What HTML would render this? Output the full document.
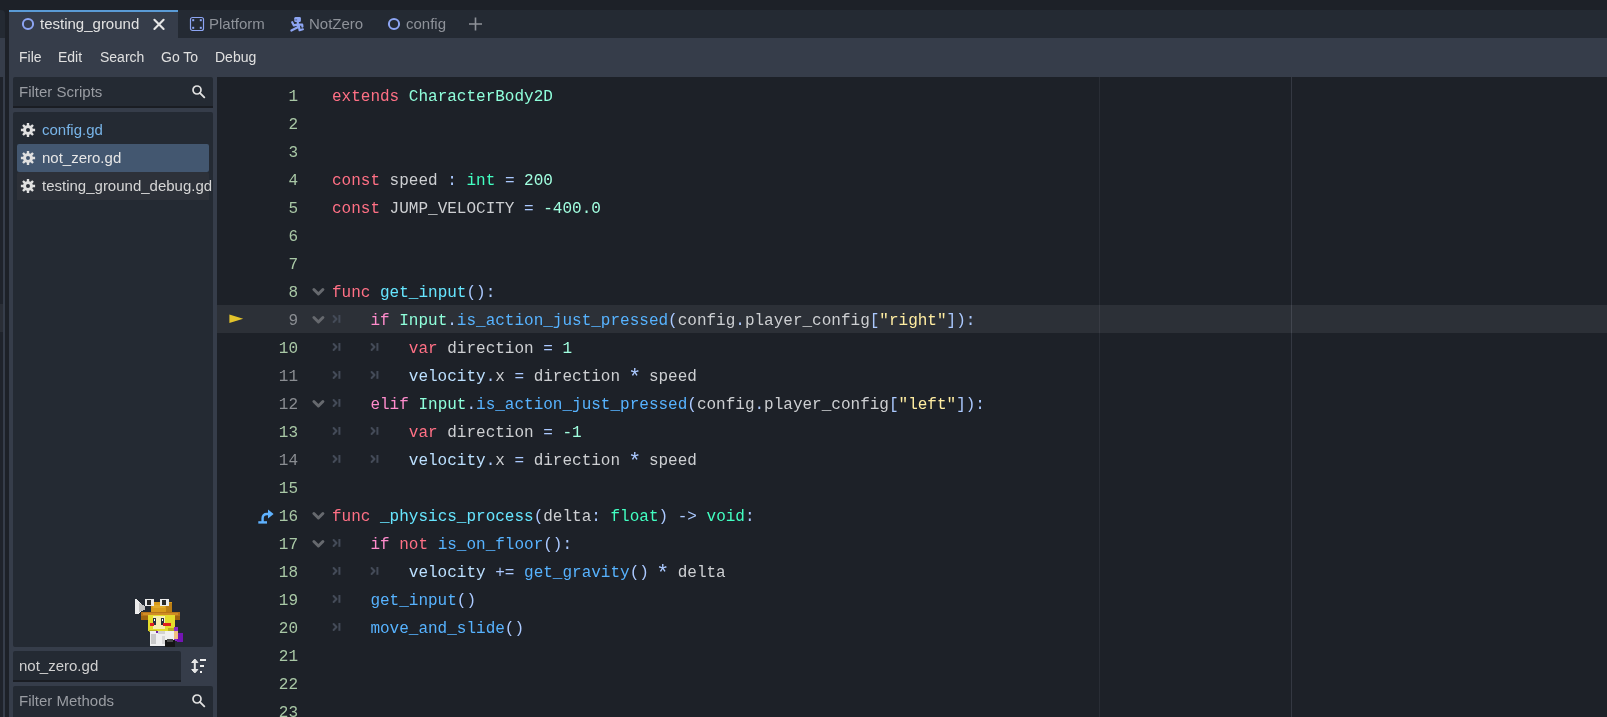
<!DOCTYPE html>
<html><head><meta charset="utf-8">
<style>
*{margin:0;padding:0;box-sizing:border-box}
html,body{width:1607px;height:717px;overflow:hidden;background:#1d2128}
body{position:relative;font-family:"Liberation Sans",sans-serif;font-size:15px;color:#e0e0e0}
.abs{position:absolute}
/* left clipped dock */
#ldock-tab{position:absolute;left:0;top:10px;width:5px;height:28px;background:#242a33;border-top-right-radius:4px}
#ldock-menu{position:absolute;left:0;top:38px;width:5px;height:39px;background:#363d4a}
#ldock-body{position:absolute;left:0;top:77px;width:5px;height:640px;background:#363d4a}
#ldock-list{position:absolute;left:0;top:77px;width:2.5px;height:640px;background:#1f232b}
#ldock-hl{position:absolute;left:0;top:304px;width:2.5px;height:28px;background:#2a2e36}
/* tab bar */
#tabbar{position:absolute;left:9px;top:10px;width:1598px;height:28px;background:#242a33}
#tab-active{position:absolute;left:9px;top:10px;width:169px;height:28px;background:#363d4a;border-top:2px solid #5a9bd6}
.tabtxt{position:absolute;top:10px;height:28px;line-height:28px;white-space:pre}
#menubar{position:absolute;left:9px;top:38px;width:1598px;height:39px;background:#363d4a}
.menu{position:absolute;top:38px;height:39px;line-height:39px;font-size:14px;white-space:pre;color:#e0e0e0}
/* left panel */
#lpanel{position:absolute;left:9px;top:77px;width:208px;height:640px;background:#363d4a}
.input{position:absolute;left:13px;width:200px;background:#242a33;border-radius:2px 2px 0 0;border-bottom:2px solid #1a1d23}
.ph{position:absolute;left:19px;white-space:pre;color:#9a9da3}
#slist{position:absolute;left:13px;top:112px;width:200px;height:535px;background:#242a33;border-radius:2px}
.item{position:absolute;left:17px;width:192px;height:28px;border-radius:2px}
.itxt{position:absolute;left:42px;white-space:pre;line-height:28px;height:28px}
.gear{position:absolute;left:20px}
#mlabel{position:absolute;left:13px;top:651px;width:168px;height:31px;background:#242a33;border-radius:2px 2px 0 0;border-bottom:2px solid #1a1d23}
/* code */
#code{position:absolute;left:217px;top:77px;width:1390px;height:640px;background:#1d2128;overflow:hidden}
.guide{position:absolute;top:77px;width:1px;height:640px}
.ln-row{position:absolute;left:0;width:1607px;height:28px}
.curline{position:absolute;left:217px;top:0;width:1390px;height:28px;background:rgba(255,255,255,0.07)}
.ln{position:absolute;left:240px;width:58px;text-align:right;font-family:"Liberation Mono",monospace;font-size:16px;line-height:28px;color:#a9c8a6;top:2px;transform-origin:0 18px;transform:scaleY(1.08)}
.ln.u{color:#8a8d92}
.code{position:absolute;left:331.5px;top:1px;font-family:"Liberation Mono",monospace;font-size:16px;line-height:28px;white-space:pre;color:#cdcfd2;top:2px}
.fold{position:absolute;left:310px;top:8px}
.tabm{position:absolute;top:8px}
.exec{position:absolute;left:229px;top:9.4px}
.ovr{position:absolute;left:257.5px;top:8px}
.menu,.tabtxt,.ph,.itxt,.code,.ln{will-change:transform}
.kw{color:#ff7085}.cf{color:#ff8ccc}.base{color:#42ffc2}.eng{color:#8fffdb}.str{color:#ffeda1}.num{color:#a1ffe0}.fdef{color:#66e6ff}.fcall{color:#57b3ff}.mem{color:#bce0ff}.sym{color:#abc9ff}.star{display:inline-block;transform:translateY(2px) scale(1.35)}
</style></head><body>
<div id="ldock-tab"></div>
<div id="ldock-menu"></div>
<div id="ldock-body"></div>
<div id="ldock-list"></div>
<div id="ldock-hl"></div>

<div id="tabbar"></div>
<div id="tab-active"></div>
<svg class="abs" style="left:21px;top:17px" width="14" height="14" viewBox="0 0 14 14"><circle cx="7" cy="7" r="5.1" fill="none" stroke="#8da5f3" stroke-width="2"/></svg>
<div class="tabtxt" style="left:40px;color:#e2e2e2">testing_ground</div>
<svg class="abs" style="left:152px;top:18px" width="14" height="13" viewBox="0 0 14 13"><path d="M2.4 1.8 L11.6 11 M11.6 1.8 L2.4 11" stroke="#e6e6e6" stroke-width="2.1" stroke-linecap="round"/></svg>

<svg class="abs" style="left:189px;top:16px" width="16" height="16" viewBox="0 0 16 16"><rect x="1.5" y="1.5" width="13" height="13" rx="2" fill="none" stroke="#8da5f3" stroke-width="1.2"/><rect x="3.2" y="3.2" width="2" height="2" fill="#8da5f3"/><rect x="10.8" y="3.2" width="2" height="2" fill="#8da5f3"/><rect x="3.2" y="10.8" width="2" height="2" fill="#8da5f3"/><rect x="10.8" y="10.8" width="2" height="2" fill="#8da5f3"/></svg>
<div class="tabtxt" style="left:209px;color:#8e9299">Platform</div>

<svg class="abs" style="left:286px;top:14px" width="22" height="20" viewBox="0 0 22 20"><rect x="8.3" y="2.9" width="6.6" height="5.2" rx="1.4" fill="#8da5f3"/><rect x="9.3" y="5.1" width="1.8" height="1.5" fill="#6274ad"/><path d="M6.2 8.2 L7.9 11.4 L12 10.4 L16.2 10.6 L16.4 12.6 M11.8 8 L11.8 13.2 L5.4 16.5 M12.9 12.3 L13.6 16.2 L16.9 15.3" fill="none" stroke="#8da5f3" stroke-width="2.2" stroke-linecap="round" stroke-linejoin="round"/></svg>
<div class="tabtxt" style="left:309px;color:#8e9299">NotZero</div>

<svg class="abs" style="left:387px;top:17px" width="14" height="14" viewBox="0 0 14 14"><circle cx="7" cy="7" r="5.1" fill="none" stroke="#8da5f3" stroke-width="2"/></svg>
<div class="tabtxt" style="left:406px;color:#8e9299">config</div>
<svg class="abs" style="left:468px;top:16px" width="16" height="16" viewBox="0 0 16 16"><path d="M7.5 1.5 V14.5 M1 8 H14" stroke="#8e9299" stroke-width="1.6"/></svg>

<div id="menubar"></div>
<div class="menu" style="left:19px">File</div>
<div class="menu" style="left:58px">Edit</div>
<div class="menu" style="left:100px">Search</div>
<div class="menu" style="left:161px">Go To</div>
<div class="menu" style="left:215px">Debug</div>

<div id="lpanel"></div>
<div class="input" style="top:77px;height:31px"></div>
<div class="ph" style="top:77px;height:30px;line-height:30px">Filter Scripts</div>
<svg class="abs" style="left:190px;top:83px" width="17" height="17" viewBox="0 0 17 17"><circle cx="7" cy="7" r="4" fill="none" stroke="#e0e0e0" stroke-width="1.7"/><path d="M9.8 9.8 L14.3 14.3" stroke="#e0e0e0" stroke-width="1.9" stroke-linecap="round"/></svg>

<div id="slist"></div>
<div class="item" style="top:144px;background:#435770"></div>
<div class="item" style="top:172px;background:#2d3139;border-radius:2px 2px 0 0"></div>
<svg class="abs" style="left:20px;top:122px" width="16" height="16" viewBox="0 0 16 16"><path d="M6.82 0.90 L9.18 0.90 L9.21 3.15 L10.57 3.71 L12.19 2.14 L13.86 3.81 L12.29 5.43 L12.85 6.79 L15.10 6.82 L15.10 9.18 L12.85 9.21 L12.29 10.57 L13.86 12.19 L12.19 13.86 L10.57 12.29 L9.21 12.85 L9.18 15.10 L6.82 15.10 L6.79 12.85 L5.43 12.29 L3.81 13.86 L2.14 12.19 L3.71 10.57 L3.15 9.21 L0.90 9.18 L0.90 6.82 L3.15 6.79 L3.71 5.43 L2.14 3.81 L3.81 2.14 L5.43 3.71 L6.79 3.15 Z M10.00 8.00 A2.0 2.0 0 1 0 6.00 8.00 A2.0 2.0 0 1 0 10.00 8.00 Z" fill="#e0e0e0" fill-rule="evenodd"/></svg>
<svg class="abs" style="left:20px;top:150px" width="16" height="16" viewBox="0 0 16 16"><path d="M6.82 0.90 L9.18 0.90 L9.21 3.15 L10.57 3.71 L12.19 2.14 L13.86 3.81 L12.29 5.43 L12.85 6.79 L15.10 6.82 L15.10 9.18 L12.85 9.21 L12.29 10.57 L13.86 12.19 L12.19 13.86 L10.57 12.29 L9.21 12.85 L9.18 15.10 L6.82 15.10 L6.79 12.85 L5.43 12.29 L3.81 13.86 L2.14 12.19 L3.71 10.57 L3.15 9.21 L0.90 9.18 L0.90 6.82 L3.15 6.79 L3.71 5.43 L2.14 3.81 L3.81 2.14 L5.43 3.71 L6.79 3.15 Z M10.00 8.00 A2.0 2.0 0 1 0 6.00 8.00 A2.0 2.0 0 1 0 10.00 8.00 Z" fill="#e0e0e0" fill-rule="evenodd"/></svg>
<svg class="abs" style="left:20px;top:178px" width="16" height="16" viewBox="0 0 16 16"><path d="M6.82 0.90 L9.18 0.90 L9.21 3.15 L10.57 3.71 L12.19 2.14 L13.86 3.81 L12.29 5.43 L12.85 6.79 L15.10 6.82 L15.10 9.18 L12.85 9.21 L12.29 10.57 L13.86 12.19 L12.19 13.86 L10.57 12.29 L9.21 12.85 L9.18 15.10 L6.82 15.10 L6.79 12.85 L5.43 12.29 L3.81 13.86 L2.14 12.19 L3.71 10.57 L3.15 9.21 L0.90 9.18 L0.90 6.82 L3.15 6.79 L3.71 5.43 L2.14 3.81 L3.81 2.14 L5.43 3.71 L6.79 3.15 Z M10.00 8.00 A2.0 2.0 0 1 0 6.00 8.00 A2.0 2.0 0 1 0 10.00 8.00 Z" fill="#e0e0e0" fill-rule="evenodd"/></svg>
<div class="itxt" style="top:116px;color:#78b4e8">config.gd</div>
<div class="itxt" style="top:144px;color:#e6e6e6">not_zero.gd</div>
<div class="itxt" style="top:172px;color:#d6d6d6">testing_ground_debug.gd</div>

<svg class="abs" style="left:0;top:0" width="200" height="700" viewBox="0 0 200 700" shape-rendering="crispEdges"><path d="M135 599 L138 600 L141 604 L145 606 L145 610 L141 611 L138 614 L135 614 Z" fill="#ececec"/><path d="M139 603 L141 604 L145 606 L145 610 L141 611 L139 612 Z" fill="#c4c4c4"/><rect x="151" y="602" width="21" height="10" fill="#d89c1c"/><rect x="166" y="603" width="6" height="9" fill="#bb7e14"/><rect x="153" y="605" width="12" height="3" fill="#e2ab2a"/><rect x="145" y="599" width="9" height="7" fill="#ececec"/><rect x="147" y="600" width="4" height="5" fill="#2a2a2a"/><rect x="160" y="599" width="9" height="7" fill="#ececec"/><rect x="162" y="600" width="4" height="5" fill="#2a2a2a"/><rect x="141" y="612" width="39" height="4" fill="#b8741a"/><rect x="143" y="613" width="35" height="2" fill="#d08c24"/><rect x="141" y="616" width="9" height="4" fill="#a0640f"/><rect x="170" y="616" width="10" height="4" fill="#a0640f"/><rect x="148" y="615" width="27" height="16" fill="#e4dc2c"/><rect x="149" y="630" width="8" height="2" fill="#b8b020"/><rect x="168" y="628" width="6" height="3" fill="#b8b020"/><rect x="153" y="616" width="12" height="13" fill="#f6eeb0"/><rect x="153" y="618" width="3" height="7" fill="#283040"/><rect x="161" y="618" width="3" height="7" fill="#283040"/><rect x="154" y="619" width="1" height="2" fill="#ffffff"/><rect x="162" y="619" width="1" height="2" fill="#ffffff"/><rect x="150" y="623" width="4" height="3" fill="#e02020"/><rect x="163" y="623" width="8" height="3" fill="#e02020"/><rect x="174" y="627" width="4" height="14" fill="#8a2cc8"/><rect x="177" y="633" width="6" height="9" fill="#7414b4"/><rect x="172" y="631" width="6" height="8" fill="#f0c080"/><rect x="150" y="631" width="24" height="15" fill="#f0f0f0"/><rect x="151" y="634" width="5" height="10" fill="#cacaca"/><rect x="158" y="631" width="7" height="3" fill="#d2d2d2"/><rect x="156" y="631" width="2" height="2" fill="#7020a0"/><rect x="162" y="636" width="3" height="8" fill="#d8d8d8"/><rect x="165" y="640" width="10" height="7" fill="#141414"/><rect x="167" y="639" width="6" height="3" fill="#4a4a4a"/></svg>

<div id="mlabel"></div>
<div class="ph" style="top:651px;height:30px;line-height:30px;color:#d0d0d0">not_zero.gd</div>
<svg class="abs" style="left:190px;top:657px" width="18" height="18" viewBox="0 0 18 18"><path d="M4.8 3 V15" stroke="#e6e6e6" stroke-width="2"/><path d="M1.7 5.5 L4.8 2 L7.9 5.5 Z M1.7 12.5 L4.8 16 L7.9 12.5 Z" fill="#e6e6e6" stroke="#e6e6e6" stroke-width="1" stroke-linejoin="round"/><rect x="10" y="2" width="6" height="2" fill="#eeeeee"/><rect x="10" y="8" width="4" height="2" fill="#eeeeee"/><rect x="10" y="14" width="2" height="2" fill="#eeeeee"/></svg>

<div class="input" style="top:686px;height:33px"></div>
<div class="ph" style="top:686px;height:30px;line-height:30px">Filter Methods</div>
<svg class="abs" style="left:190px;top:692px" width="17" height="17" viewBox="0 0 17 17"><circle cx="7" cy="7" r="4" fill="none" stroke="#e0e0e0" stroke-width="1.7"/><path d="M9.8 9.8 L14.3 14.3" stroke="#e0e0e0" stroke-width="1.9" stroke-linecap="round"/></svg>

<div id="code"></div>
<div class="guide" style="left:1099px;background:#292d35"></div>
<div class="guide" style="left:1291px;background:#343842"></div>
<div class="ln-row" style="top:81px">
<div class="ln">1</div>
<div class="code"><span class="kw">extends</span> <span class="eng">CharacterBody2D</span></div>
</div>
<div class="ln-row" style="top:109px">
<div class="ln">2</div>
<div class="code"></div>
</div>
<div class="ln-row" style="top:137px">
<div class="ln">3</div>
<div class="code"></div>
</div>
<div class="ln-row" style="top:165px">
<div class="ln">4</div>
<div class="code"><span class="kw">const</span> speed <span class="sym">:</span> <span class="base">int</span> <span class="sym">=</span> <span class="num">200</span></div>
</div>
<div class="ln-row" style="top:193px">
<div class="ln">5</div>
<div class="code"><span class="kw">const</span> JUMP_VELOCITY <span class="sym">=</span> <span class="num">-400.0</span></div>
</div>
<div class="ln-row" style="top:221px">
<div class="ln">6</div>
<div class="code"></div>
</div>
<div class="ln-row" style="top:249px">
<div class="ln">7</div>
<div class="code"></div>
</div>
<div class="ln-row" style="top:277px">
<div class="ln">8</div>
<svg class="fold" width="16" height="16" viewBox="0 0 16 16"><path d="M3.9 4.5 L8.4 9 L12.9 4.5" fill="none" stroke="#66696e" stroke-width="3" stroke-linecap="round" stroke-linejoin="round"/></svg>
<div class="code"><span class="kw">func</span> <span class="fdef">get_input</span><span class="sym">():</span></div>
</div>
<div class="ln-row" style="top:305px">
<div class="curline"></div>
<div class="ln u">9</div>
<svg class="fold" width="16" height="16" viewBox="0 0 16 16"><path d="M3.9 4.5 L8.4 9 L12.9 4.5" fill="none" stroke="#66696e" stroke-width="3" stroke-linecap="round" stroke-linejoin="round"/></svg>
<svg class="tabm" style="left:331.5px" width="12" height="12" viewBox="0 0 12 12"><path d="M1.6 3 L4.5 6 L1.6 9" fill="none" stroke="#444b58" stroke-width="2" stroke-linecap="round" stroke-linejoin="round"/><path d="M7.4 2 V9.8" stroke="#444b58" stroke-width="2"/></svg>
<div class="code">    <span class="cf">if</span> <span class="eng">Input</span><span class="sym">.</span><span class="fcall">is_action_just_pressed</span><span class="sym">(</span>config<span class="sym">.</span>player_config<span class="sym">[</span><span class="str">&quot;right&quot;</span><span class="sym">]):</span></div>
<svg class="exec" width="16" height="12" viewBox="0 0 16 12"><path d="M0.4 0.4 L14.2 4.7 L0.4 9 Z" fill="#e3c32b"/></svg>
</div>
<div class="ln-row" style="top:333px">
<div class="ln">10</div>
<svg class="tabm" style="left:331.5px" width="12" height="12" viewBox="0 0 12 12"><path d="M1.6 3 L4.5 6 L1.6 9" fill="none" stroke="#444b58" stroke-width="2" stroke-linecap="round" stroke-linejoin="round"/><path d="M7.4 2 V9.8" stroke="#444b58" stroke-width="2"/></svg>
<svg class="tabm" style="left:369.9px" width="12" height="12" viewBox="0 0 12 12"><path d="M1.6 3 L4.5 6 L1.6 9" fill="none" stroke="#444b58" stroke-width="2" stroke-linecap="round" stroke-linejoin="round"/><path d="M7.4 2 V9.8" stroke="#444b58" stroke-width="2"/></svg>
<div class="code">        <span class="kw">var</span> direction <span class="sym">=</span> <span class="num">1</span></div>
</div>
<div class="ln-row" style="top:361px">
<div class="ln u">11</div>
<svg class="tabm" style="left:331.5px" width="12" height="12" viewBox="0 0 12 12"><path d="M1.6 3 L4.5 6 L1.6 9" fill="none" stroke="#444b58" stroke-width="2" stroke-linecap="round" stroke-linejoin="round"/><path d="M7.4 2 V9.8" stroke="#444b58" stroke-width="2"/></svg>
<svg class="tabm" style="left:369.9px" width="12" height="12" viewBox="0 0 12 12"><path d="M1.6 3 L4.5 6 L1.6 9" fill="none" stroke="#444b58" stroke-width="2" stroke-linecap="round" stroke-linejoin="round"/><path d="M7.4 2 V9.8" stroke="#444b58" stroke-width="2"/></svg>
<div class="code">        <span class="mem">velocity</span><span class="sym">.</span>x <span class="sym">=</span> direction <span class="sym star">*</span> speed</div>
</div>
<div class="ln-row" style="top:389px">
<div class="ln u">12</div>
<svg class="fold" width="16" height="16" viewBox="0 0 16 16"><path d="M3.9 4.5 L8.4 9 L12.9 4.5" fill="none" stroke="#66696e" stroke-width="3" stroke-linecap="round" stroke-linejoin="round"/></svg>
<svg class="tabm" style="left:331.5px" width="12" height="12" viewBox="0 0 12 12"><path d="M1.6 3 L4.5 6 L1.6 9" fill="none" stroke="#444b58" stroke-width="2" stroke-linecap="round" stroke-linejoin="round"/><path d="M7.4 2 V9.8" stroke="#444b58" stroke-width="2"/></svg>
<div class="code">    <span class="cf">elif</span> <span class="eng">Input</span><span class="sym">.</span><span class="fcall">is_action_just_pressed</span><span class="sym">(</span>config<span class="sym">.</span>player_config<span class="sym">[</span><span class="str">&quot;left&quot;</span><span class="sym">]):</span></div>
</div>
<div class="ln-row" style="top:417px">
<div class="ln">13</div>
<svg class="tabm" style="left:331.5px" width="12" height="12" viewBox="0 0 12 12"><path d="M1.6 3 L4.5 6 L1.6 9" fill="none" stroke="#444b58" stroke-width="2" stroke-linecap="round" stroke-linejoin="round"/><path d="M7.4 2 V9.8" stroke="#444b58" stroke-width="2"/></svg>
<svg class="tabm" style="left:369.9px" width="12" height="12" viewBox="0 0 12 12"><path d="M1.6 3 L4.5 6 L1.6 9" fill="none" stroke="#444b58" stroke-width="2" stroke-linecap="round" stroke-linejoin="round"/><path d="M7.4 2 V9.8" stroke="#444b58" stroke-width="2"/></svg>
<div class="code">        <span class="kw">var</span> direction <span class="sym">=</span> <span class="num">-1</span></div>
</div>
<div class="ln-row" style="top:445px">
<div class="ln u">14</div>
<svg class="tabm" style="left:331.5px" width="12" height="12" viewBox="0 0 12 12"><path d="M1.6 3 L4.5 6 L1.6 9" fill="none" stroke="#444b58" stroke-width="2" stroke-linecap="round" stroke-linejoin="round"/><path d="M7.4 2 V9.8" stroke="#444b58" stroke-width="2"/></svg>
<svg class="tabm" style="left:369.9px" width="12" height="12" viewBox="0 0 12 12"><path d="M1.6 3 L4.5 6 L1.6 9" fill="none" stroke="#444b58" stroke-width="2" stroke-linecap="round" stroke-linejoin="round"/><path d="M7.4 2 V9.8" stroke="#444b58" stroke-width="2"/></svg>
<div class="code">        <span class="mem">velocity</span><span class="sym">.</span>x <span class="sym">=</span> direction <span class="sym star">*</span> speed</div>
</div>
<div class="ln-row" style="top:473px">
<div class="ln">15</div>
<div class="code"></div>
</div>
<div class="ln-row" style="top:501px">
<div class="ln">16</div>
<svg class="fold" width="16" height="16" viewBox="0 0 16 16"><path d="M3.9 4.5 L8.4 9 L12.9 4.5" fill="none" stroke="#66696e" stroke-width="3" stroke-linecap="round" stroke-linejoin="round"/></svg>
<div class="code"><span class="kw">func</span> <span class="fdef">_physics_process</span><span class="sym">(</span>delta<span class="sym">:</span> <span class="base">float</span><span class="sym">)</span> <span class="sym">-&gt;</span> <span class="base">void</span><span class="sym">:</span></div>
<svg class="ovr" width="17" height="16" viewBox="0 0 17 16"><path d="M0.3 12.2 H9 V14.6 H0.3 Z" fill="#5fb2ff"/><path d="M4.6 13 V9.2 Q4.6 5 9 5 H10.5" fill="none" stroke="#5fb2ff" stroke-width="2.4"/><path d="M10 0.5 L15.6 5 L10 9.5 Z" fill="#5fb2ff"/></svg>
</div>
<div class="ln-row" style="top:529px">
<div class="ln">17</div>
<svg class="fold" width="16" height="16" viewBox="0 0 16 16"><path d="M3.9 4.5 L8.4 9 L12.9 4.5" fill="none" stroke="#66696e" stroke-width="3" stroke-linecap="round" stroke-linejoin="round"/></svg>
<svg class="tabm" style="left:331.5px" width="12" height="12" viewBox="0 0 12 12"><path d="M1.6 3 L4.5 6 L1.6 9" fill="none" stroke="#444b58" stroke-width="2" stroke-linecap="round" stroke-linejoin="round"/><path d="M7.4 2 V9.8" stroke="#444b58" stroke-width="2"/></svg>
<div class="code">    <span class="cf">if</span> <span class="kw">not</span> <span class="fcall">is_on_floor</span><span class="sym">():</span></div>
</div>
<div class="ln-row" style="top:557px">
<div class="ln">18</div>
<svg class="tabm" style="left:331.5px" width="12" height="12" viewBox="0 0 12 12"><path d="M1.6 3 L4.5 6 L1.6 9" fill="none" stroke="#444b58" stroke-width="2" stroke-linecap="round" stroke-linejoin="round"/><path d="M7.4 2 V9.8" stroke="#444b58" stroke-width="2"/></svg>
<svg class="tabm" style="left:369.9px" width="12" height="12" viewBox="0 0 12 12"><path d="M1.6 3 L4.5 6 L1.6 9" fill="none" stroke="#444b58" stroke-width="2" stroke-linecap="round" stroke-linejoin="round"/><path d="M7.4 2 V9.8" stroke="#444b58" stroke-width="2"/></svg>
<div class="code">        <span class="mem">velocity</span> <span class="sym">+=</span> <span class="fcall">get_gravity</span><span class="sym">()</span> <span class="sym star">*</span> delta</div>
</div>
<div class="ln-row" style="top:585px">
<div class="ln">19</div>
<svg class="tabm" style="left:331.5px" width="12" height="12" viewBox="0 0 12 12"><path d="M1.6 3 L4.5 6 L1.6 9" fill="none" stroke="#444b58" stroke-width="2" stroke-linecap="round" stroke-linejoin="round"/><path d="M7.4 2 V9.8" stroke="#444b58" stroke-width="2"/></svg>
<div class="code">    <span class="fcall">get_input</span><span class="sym">()</span></div>
</div>
<div class="ln-row" style="top:613px">
<div class="ln">20</div>
<svg class="tabm" style="left:331.5px" width="12" height="12" viewBox="0 0 12 12"><path d="M1.6 3 L4.5 6 L1.6 9" fill="none" stroke="#444b58" stroke-width="2" stroke-linecap="round" stroke-linejoin="round"/><path d="M7.4 2 V9.8" stroke="#444b58" stroke-width="2"/></svg>
<div class="code">    <span class="fcall">move_and_slide</span><span class="sym">()</span></div>
</div>
<div class="ln-row" style="top:641px">
<div class="ln">21</div>
<div class="code"></div>
</div>
<div class="ln-row" style="top:669px">
<div class="ln">22</div>
<div class="code"></div>
</div>
<div class="ln-row" style="top:697px">
<div class="ln">23</div>
<div class="code"></div>
</div>
</body></html>
